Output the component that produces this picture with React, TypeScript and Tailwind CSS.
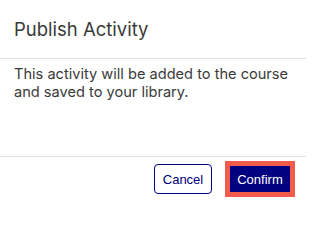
import React from "react";

export default function App() {
  return (
    <div className="w-[306px] h-[200px] bg-white flex flex-col font-['Inter','Liberation_Sans',sans-serif]">
      <div className="h-[59px] shrink-0 border-b border-[#e2e2e6] flex items-center px-[14px]">
        <h2 className="text-[18.5px] leading-none font-normal text-[#3a3a3a]">Publish Activity</h2>
      </div>
      <div className="h-[97px] shrink-0 px-[14px] pt-[6px]">
        <p className="text-[14.6px] leading-[18px] text-[#3a3a3a]">
          This activity will be added to the course and saved to your library.
        </p>
      </div>
      <div className="flex-1 border-t border-[#e2e2e6] flex items-center justify-end pr-4 gap-[18px] pt-[1px]">
        <button className="h-[30px] w-[58px] rounded-[4px] border border-[#000080] bg-white text-[#000080] text-[13px] leading-none font-['Liberation_Sans',Arial,sans-serif]">
          Cancel
        </button>
        <button className="h-[26px] w-[60px] bg-[#000080] text-white text-[13px] leading-none ring-[5px] ring-[#f25c4b] font-['Liberation_Sans',Arial,sans-serif]">
          Confirm
        </button>
      </div>
    </div>
  );
}
